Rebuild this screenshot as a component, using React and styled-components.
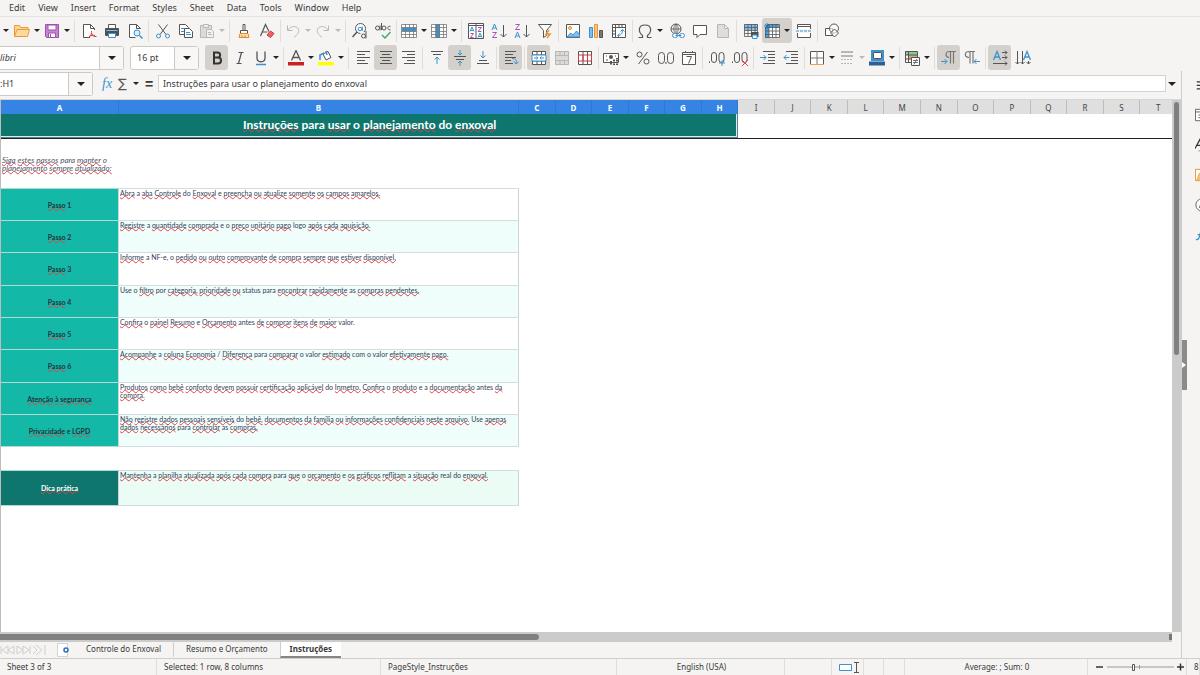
import { Fragment } from 'react';

import { createGlobalStyle, styled } from 'styled-components';

const INK = '#555';
const BLUE = '#3a93cf';
const SKY = '#83beec';
const GRAY = '#b9b7b4';
const PURPLE = '#a855b5';

// 16x16 toolbar drawings
const ICONS = {
  folder: (
    <>
      <path d="M.5 13.500V2.500h5l1.500 2h7V7" fill="#fbd68f" stroke="#e89a3c" />
      <path d="M.5 13.500 3 6.500h12.500l-2 7z" fill="#fbdb9c" stroke="#e89a3c" />
    </>
  ),
  save: (
    <>
      <path d="M1.500 1.500h13v13h-12l-1-1z" fill="#c883d4" stroke="#9c52ad" />
      <path d="M4 2h8v5H4zM4.500 10h7v4.500h-7z" fill="#fff" stroke="#9c52ad" />
      <path d="M6.500 11v3" stroke="#9c52ad" />
    </>
  ),
  pdf: (
    <>
      <path d="M13.500 7V5.500l-4-4h-7v13H9M9.500 1.500v4h4" fill="#fff" stroke={INK} />
      <path d="M7 15c3-2 4-5 3.500-7M10.500 10c1 3 3 4 5 3.500M8 13.500c2-1 4-1.500 6-1" stroke="#d83b45" />
    </>
  ),
  print: (
    <>
      <path d="M4.500 5V1.500h7V5" fill="#fff" stroke={INK} />
      <rect x="1" y="5" width="14" height="8" rx="1" fill="#4c5153" />
      <path d="M2.500 7.500h11" stroke={SKY} />
      <path d="M4.500 10.500h7v4h-7z" fill="#fff" stroke={BLUE} />
    </>
  ),
  preview: (
    <>
      <path d="M13.500 6V5.500l-4-4h-7v13h6M9.500 1.500v4h4" fill="#fff" stroke={INK} />
      <circle cx="10" cy="10" r="3" fill="#d9edfb" stroke={BLUE} />
      <path d="m12.500 12.500 3 3" stroke={BLUE} strokeWidth="1.500" />
    </>
  ),
  cut: (
    <>
      <path d="m3.500 1.500 7.500 10M12.500 1.500 5 11.500" stroke={INK} />
      <circle cx="3.500" cy="13" r="2" stroke={BLUE} />
      <circle cx="12.500" cy="13" r="2" stroke={BLUE} />
    </>
  ),
  copy: (
    <>
      <path d="M1.500 1.500h6l3 3v7h-9z" fill="#fff" stroke={INK} />
      <path d="M3 5.500h3M3 8.500h3" stroke={BLUE} />
      <path d="M6.500 5.500h5l3 3v6h-8z" fill="#fff" stroke={INK} />
      <path d="M8 9.500h4M8 11.500h5" stroke={BLUE} />
    </>
  ),
  paste: (
    <>
      <path d="M1.500 2.500h11v12h-11z" fill="#dddbd9" stroke={GRAY} />
      <path d="M4.500 1.500h5v3h-5z" fill="#eee" stroke={GRAY} />
      <path d="M7.500 6.500h5l2 2v6h-7z" fill="#f3f2f1" stroke={GRAY} />
      <path d="M9 9.500h3M9 11.500h4" stroke={GRAY} />
    </>
  ),
  brush: (
    <>
      <path d="M7 1.500h2v6H7z" fill="#fff" stroke={INK} />
      <path d="M4.500 7.500h7v3h-7z" fill="#fff" stroke={INK} />
      <path d="M4 10.500h8l1 4H3zM6 12v2M9 12v2" fill="#fbe0b8" stroke="#e08a2c" />
    </>
  ),
  clear: (
    <>
      <path d="M1.500 13 6.500 1.500l3.500 7M3.500 9h5" stroke={INK} strokeWidth="1.200" />
      <path d="m8 12 3.500-4L15 10.500 11.500 14.500z" fill="#f0626a" stroke="#c93640" />
    </>
  ),
  undo: <path d="M2.500 2.500v5h5M3 7c3-4.500 9-4.500 10.500-.5 1 3-1.500 5.500-4.500 8" stroke={GRAY} />,
  redo: <path d="M13.500 2.500v5h-5M13 7C10 2.500 4 2.500 2.500 6.500c-1 3 1.500 5.500 4.500 8" stroke={GRAY} />,
  find: (
    <>
      <circle cx="8.500" cy="5.500" r="5" fill="#fff" stroke={INK} />
      <path d="M5 9 .5 14" stroke={INK} strokeWidth="1.500" />
      <circle cx="8" cy="6" r="1.800" stroke={BLUE} />
      <path d="M10.300 3.500V8" stroke={BLUE} />
      <path d="M8.500 9h7v6.500h-7z" fill="#f5f4f2" />
      <circle cx="11.500" cy="13" r="2" stroke={INK} />
      <path d="M14 8v7.500" stroke={INK} />
    </>
  ),
  spell: (
    <>
      <circle cx="2.500" cy="5" r="2" stroke={INK} />
      <path d="M5 2.500v5M6.500 0v7M15.500 3.500c-3-1.500-4 3.500 0 3.500" stroke={INK} />
      <circle cx="9" cy="5" r="2" stroke={INK} />
      <path d="m7 12 3 3 5.500-6" stroke="#3bab6b" strokeWidth="1.400" />
    </>
  ),
  rows: (
    <>
      <path d="M1 1h14v14H1z" fill="#fff" />
      <path d="M1 4.500h14v4H1z" fill={BLUE} />
      <path d="M.5 1.500h15v13H.5zM.5 4.500h15M.5 8.500h15M.5 11.500h15M4.500 1v14M8.500 1v14M12.500 1v14" stroke="#777" strokeWidth=".8" />
    </>
  ),
  cols: (
    <>
      <path d="M1 1h14v14H1z" fill="#fff" />
      <path d="M5 1h4v14H5z" fill={BLUE} />
      <path d="M.5 1.500h15v13H.5zM.5 4.500h15M.5 8.500h15M.5 11.500h15M4.500 1v14M8.500 1v14M12.500 1v14" stroke="#777" strokeWidth=".8" />
    </>
  ),
  autosort: (
    <>
      <path d="M.5.5h15v15H.5zM8 1v14M1 2.500h14" fill="#fff" stroke={INK} />
      <path d="m2 8.500 2-4.500 2 4.500M3 7.500h2M10 14.500l2-4.500 2 4.500M11 13.500h2" stroke={BLUE} />
      <path d="M2.500 10.500h3l-3 4h3M10 4.500h3.500l-3.500 4h3.500" stroke={PURPLE} />
    </>
  ),
  asc: (
    <>
      <path d="m1 7 2.500-6L6 7M2 5h3" stroke={BLUE} />
      <path d="M1.500 9.500h4l-4 5h4.500" stroke={PURPLE} />
      <path d="M12.500 2v12M9.500 11l3 3 3-3" stroke={INK} />
    </>
  ),
  desc: (
    <>
      <path d="m1 15 2.500-6L6 15M2 13h3" stroke={BLUE} />
      <path d="M1.500 1.500h4l-4 5h4.500" stroke={PURPLE} />
      <path d="M12.500 2v12M9.500 11l3 3 3-3" stroke={INK} />
    </>
  ),
  filter: (
    <>
      <path d="M1.500 1.500h13l-5 6v5l-3 2v-7z" fill="#fff" stroke={INK} />
      <path d="m12 7-3 4h4l-3 4" stroke="#e8923a" strokeWidth="1.500" />
    </>
  ),
  image: (
    <>
      <path d="M1.500 1.500h13v13h-13z" fill="#fff" stroke={INK} />
      <circle cx="5" cy="5" r="1.500" fill="#fbd08a" stroke="#e8923a" />
      <path d="m2 14 3.500-4 2.500 2 3.500-4 3 3.500V14z" fill={SKY} stroke={BLUE} />
    </>
  ),
  chart: (
    <>
      <path d="M1.500 4.500h3v10h-3z" fill={SKY} stroke={BLUE} />
      <path d="M6.500 1.500h3v13h-3z" fill="#fbc77c" stroke="#e8923a" />
      <path d="M11.500 7.500h3v7h-3z" fill="#777" stroke={INK} />
    </>
  ),
  pivot: (
    <>
      <path d="M1.500 1.500h13v13h-13zM1.500 4.500h13M4.500 1.500v13M8 1.500v3M11 1.500v3M1.500 8h3M1.500 11h3" fill="#fff" stroke={INK} />
      <path d="M6.500 12.500c4 0 5-2 5-6m-2 2 2-2 2 2m-5 2-2 2 2 2" stroke={BLUE} />
    </>
  ),
  omega: <path d="M1.500 14.500h4v-2C1 9 1 2 8 2s7 7 2.500 10.500v2h4" stroke={INK} strokeWidth="1.200" />,
  link: (
    <>
      <circle cx="7" cy="6" r="5" stroke={INK} />
      <path d="M2 6h10M7 1v10M7 1c-3 3-3 7 0 10M7 1c3 3 3 7 0 10" stroke={INK} strokeWidth=".8" />
      <rect x="3.500" y="10.500" width="5" height="4" rx="2" fill="#fff" stroke={BLUE} />
      <rect x="10.500" y="10.500" width="5" height="4" rx="2" fill="#fff" stroke={BLUE} />
      <path d="M6.500 12.500h6" stroke={BLUE} />
    </>
  ),
  comment: <path d="M1.500 2.500h13v9H8l-3 3v-3H1.500z" fill="#fff" stroke={INK} />,
  page: <path d="M2.500 1.500h7l4 4v9h-11zM9.500 1.500v4h4" fill="#dedddb" stroke={GRAY} />,
  printArea: (
    <>
      <path d="M1 1h14v6H1z" fill={SKY} />
      <path d="M1.500 1.500h13v12h-13zM1.500 4.500h13M1.500 7.500h13M1.500 10.500h13M5 1v12M8.500 1v12M12 1v12" stroke={INK} strokeWidth=".8" />
      <path d="M8 9h7.500v5H8z" fill="#4c5153" />
      <path d="M9.500 12h4.500v3.500H9.500z" fill="#fff" stroke={BLUE} />
    </>
  ),
  freeze: (
    <>
      <path d="M4 4h11v11H4z" fill="#fff" />
      <path d="M3 1h12v3.500H3zM1 4h4v11H1z" fill="#4aa3e0" />
      <path d="M3.500 1.500h12v13h-14v-10M1 4.500h14M1 8h14M1 11.500h14M5 1v14M8.500 1v14M12 1v14" stroke={INK} strokeWidth=".8" />
      <path d="M0 3h6M3 0v6M1 1l4 4M5 1 1 5" stroke="#1c71b8" strokeWidth=".8" />
    </>
  ),
  split: (
    <>
      <path d="M1.500 6V1.500h13V6M1.500 10v4.500h13V10M1.500 3.500h13" fill="#fff" stroke={INK} />
      <path d="M0 8h16" stroke={BLUE} strokeDasharray="3 1" />
    </>
  ),
  shapes: (
    <>
      <path d="M1.500 5.500h7v7h-7z" fill="#fff" stroke={INK} />
      <circle cx="10" cy="5.500" r="4.500" fill="#fff" fillOpacity=".6" stroke={INK} />
      <path d="m10.500 6 4 4-4 4-4-4z" fill="#fff" fillOpacity=".6" stroke={INK} />
    </>
  ),
  bold: <path d="M5 2.500h3.500c3.500 0 3.500 5 0 5H5zM5 7.500h4c4 0 4 6 0 6H5z" stroke="#333" strokeWidth="2" />,
  italic: <path d="M6.500 2.500h5M4.500 13.500h5M9.500 2.500l-3 11" stroke={INK} strokeWidth="1.200" />,
  underline: (
    <>
      <path d="M4 1.500V8c0 5 8 5 8 0V1.500" stroke={INK} strokeWidth="1.300" />
      <path d="M3 14.500h10" stroke={BLUE} strokeWidth="1.500" />
    </>
  ),
  fontColor: (
    <>
      <path d="M3.500 10.500 8 .5l4.500 10M5 7.500h6" stroke={INK} strokeWidth="1.300" />
      <path d="M0 12h16v3.500H0z" fill="#c9211e" />
    </>
  ),
  highlight: (
    <>
      <path d="m5 4 5-2.500 3 6L8 10z" fill="#fff" stroke={INK} />
      <path d="M2 10V5l4-2M9 5l-1-4" stroke={BLUE} strokeWidth="1.500" />
      <path d="M0 12h16v3.500H0z" fill="#ff0" />
    </>
  ),
  left: <path d="M2 1.500h13M2 4.500h8M2 7.500h13M2 10.500h8M2 13.500h11" stroke={INK} />,
  center: <path d="M2 1.500h12M4 4.500h8M2 7.500h12M4 10.500h8M2 13.500h12" stroke={INK} />,
  right: <path d="M1 1.500h13M6 4.500h8M1 7.500h13M6 10.500h8M3 13.500h11" stroke={INK} />,
  top: (
    <>
      <path d="M2 1.500h12M4 4.500h8" stroke={INK} />
      <path d="M8 14V7.500m-2.500 2L8 7l2.500 2.500" stroke={BLUE} />
    </>
  ),
  middle: (
    <>
      <path d="M2 6.500h12M4 9.500h8" stroke={INK} />
      <path d="M8 0v5M6 3l2 2 2-2M8 16v-5M6 13l2-2 2 2" stroke={BLUE} />
    </>
  ),
  bottom: (
    <>
      <path d="M2 13.500h12M4 10.500h8" stroke={INK} />
      <path d="M8 1v7M5.500 5.500 8 8l2.500-2.500" stroke={BLUE} />
    </>
  ),
  wrap: (
    <>
      <path d="M2 1.500h11M2 4.500h8M2 7.500h11M2 10.500h6M2 13.500h8" stroke={INK} />
      <path d="M9 8.500c4 0 5 2 4 5m-2-2 2 2.500 2.500-2" stroke={BLUE} />
    </>
  ),
  merge: (
    <>
      <path d="M1.500 1.500h13v13h-13zM1.500 5h13M1.500 11h13M6 1.500V5M10.500 1.500V5M6 11v3.500M10.500 11v3.500" fill="#fff" stroke={INK} />
      <path d="M1 5h14v6H1z" fill="#fff" stroke={BLUE} />
      <path d="M3 8h4M9 8h4M5.500 6.500 7 8 5.500 9.500M10.500 6.500 9 8l1.500 1.500" stroke={BLUE} />
    </>
  ),
  mergeCells: <path d="M1.500 1.500h13v13h-13zM1.500 5.500h13M1.500 10.500h13M6 1.500v4M10.500 1.500v4M6 10.500v4M10.500 10.500v4" fill="#dddbd9" stroke={GRAY} />,
  unmerge: (
    <>
      <path d="M1.500 1.500h13v13h-13zM6 1.500v13M10.500 1.500v13" fill="#fff" stroke={INK} />
      <path d="M1.500 5h13v6h-13zM6 5v6M10.500 5v6" stroke="#cf3a42" />
    </>
  ),
  currency: (
    <>
      <path d="M.5 3.500h15v9H.5z" fill="#fff" stroke={INK} />
      <circle cx="8" cy="7" r="2" fill={INK} />
      <path d="M3 10h2M3 6h1M12 6h1" stroke={INK} />
      <path d="M8 11v4M11 9.500V15M14 8v7" stroke={INK} strokeWidth="2" strokeDasharray="1.500 .5" />
    </>
  ),
  percent: (
    <>
      <circle cx="4.500" cy="4.500" r="2.500" stroke={INK} />
      <circle cx="11.500" cy="11.500" r="2.500" stroke={INK} />
      <path d="m12.500 2-9 12" stroke={INK} />
    </>
  ),
  number: (
    <>
      <rect x=".5" y="2.500" width="6" height="11" rx="3" stroke={INK} />
      <rect x="9.500" y="2.500" width="6" height="11" rx="3" stroke={INK} />
      <path d="M8 12v2" stroke={INK} />
    </>
  ),
  date: (
    <>
      <path d="M1.500 2.500h13v12h-13zM1.500 4.500h13M4.500 1v2M11.500 1v2" fill="#fff" stroke={INK} />
      <path d="M5.500 6.500h5l-3 7" stroke={INK} />
    </>
  ),
  addDecimal: (
    <>
      <rect x="2.500" y="2.500" width="5" height="10" rx="2.500" stroke={INK} />
      <rect x="10" y="2.500" width="5" height="10" rx="2.500" stroke={INK} />
      <path d="M.5 11.500V13" stroke={INK} />
      <path d="M10 13h6M13 10v6" stroke={BLUE} />
    </>
  ),
  delDecimal: (
    <>
      <rect x="2.500" y="2.500" width="5" height="10" rx="2.500" stroke={INK} />
      <rect x="10" y="2.500" width="5" height="10" rx="2.500" stroke={INK} />
      <path d="M.5 11.500V13" stroke={INK} />
      <path d="m10 10 6 6M16 10l-6 6" stroke="#e04850" />
    </>
  ),
  indent: (
    <>
      <path d="M3 1.500h12M8 4.500h7M8 7.500h7M8 10.500h7M3 13.500h12" stroke={INK} />
      <path d="M0 7.500h6M3.500 5 6 7.500 3.500 10" stroke={BLUE} />
    </>
  ),
  outdent: (
    <>
      <path d="M3 1.500h12M8 4.500h7M8 7.500h7M8 10.500h7M3 13.500h12" stroke={INK} />
      <path d="M6.500 7.500H1M3.500 5 1 7.500 3.500 10" stroke={BLUE} />
    </>
  ),
  borders: (
    <>
      <path d="M1.500 1.500h13v13h-13z" fill="#fff" stroke={INK} />
      <path d="M8 1v13.500M1.500 8h13" stroke="#777" />
      <path d="M1 14.500h14" stroke="#e8a24a" />
    </>
  ),
  lineStyle: (
    <>
      <path d="M2 2h12M2 6h12" stroke={GRAY} strokeWidth="2" />
      <path d="M2 9.500h12M2 13.500h12" stroke={GRAY} strokeDasharray="2 1" />
    </>
  ),
  lineColor: (
    <>
      <path d="M3 1h11v9H3z" fill="#fff" stroke={BLUE} strokeWidth="2" />
      <path d="M4.500 2.500h8v6h-8z" stroke={INK} />
      <path d="M0 11.500h16v4H0z" fill="#2a6099" />
    </>
  ),
  conditional: (
    <>
      <path d="M1 1h12v4H1z" fill="#7fd08f" />
      <path d="M4 5h9v4H4z" fill="#f29a7c" />
      <path d="M1.500 1.500h12v11h-12zM1.500 5h12M1.500 9h12M4.500 1.500v11" stroke={INK} />
      <path d="M7.500 7.500h8v8h-8z" fill="#fff" stroke={INK} />
      <path d="M9 10.500h5M9 12.500h5M13 9l-3 5.500" stroke={INK} strokeWidth=".8" />
    </>
  ),
  ltr: (
    <>
      <path d="M8 7.500C4 7 4 1.500 8.500 1.500H15M9.500 1.500v12M12.500 1.500v12" stroke="#777" strokeWidth="1.200" />
      <path d="M0 11.500h6M3.500 9 6 11.500 3.500 14" stroke={BLUE} />
    </>
  ),
  rtl: (
    <>
      <path d="M5 7.500C0 7 0 1.500 5.500 1.500H11M6 1.500v12M9 1.500v12" stroke="#777" strokeWidth="1.200" />
      <path d="M16 11.500h-6M12.500 9 10 11.500l2.500 2.500" stroke={BLUE} />
    </>
  ),
  textH: (
    <>
      <path d="M1.500 10 5 1.500 8.500 10M3 7h4" stroke={BLUE} strokeWidth="1.300" />
      <path d="M10 2.500h5M10 7.500h5M1 13.500h14M13 .5l2 2-2 2M13 5.500l2 2-2 2M13 11.500l2 2-2 2" stroke={INK} />
    </>
  ),
  textV: (
    <>
      <path d="M8.500 10 12 1.500 15.500 10M10 7h4" stroke={BLUE} strokeWidth="1.300" />
      <path d="M2.500 1v13M7.500 1v13M13.500 11v3M.5 12l2 2 2-2M5.500 12l2 2 2-2M11.500 12l2 2 2-2" stroke={INK} />
    </>
  ),
  menu: <path d="M2 4.500h12M2 8.500h12M2 12.500h12" stroke="#333" strokeWidth="1.500" />,
  properties: <path d="M.5 1.500h15v13H.5zM.5 4.500h15M4 8h8M4 11h8" fill="#fff" stroke={INK} />,
  styles: (
    <>
      <path d="M0 12 6 1l4 8M2.500 8.500h6" stroke="#333" strokeWidth="1.500" />
      <path d="M4 15c3 0 3-3 6-3" stroke={BLUE} />
    </>
  ),
  gallery: (
    <>
      <path d="M.5 1.500h15v13H.5z" fill="#fff" stroke="#e08a2c" />
      <path d="M2 14 5 6h10v8z" fill="#f9c568" stroke="#e8a24a" />
    </>
  ),
  navigator: (
    <>
      <circle cx="8" cy="8" r="7" fill="#fff" stroke={INK} />
      <path d="m11 5-2 4.500L5 11l1.500-4z" stroke={INK} />
    </>
  ),
  functions: <path d="M1 13c4 2 4-5 6-10 1-2 3-2 4 0M3 7.500h7" stroke={BLUE} strokeWidth="1.500" />,
};

// "+" has a drop-down arrow, "-" a disabled one, "*" is switched on
const STANDARD_BAR = [
  ['folder+', 'save+'],
  ['pdf', 'print', 'preview'],
  ['cut', 'copy', 'paste-'],
  ['brush', 'clear'],
  ['undo-', 'redo-'],
  ['find', 'spell'],
  ['rows+', 'cols+'],
  ['autosort', 'asc', 'desc', 'filter'],
  ['image', 'chart', 'pivot'],
  ['omega+', 'link', 'comment', 'page'],
  ['printArea', 'freeze+*', 'split'],
  ['shapes'],
];

const FORMAT_BAR = [
  ['bold*', 'italic', 'underline+'],
  ['fontColor+', 'highlight+'],
  ['left', 'center*', 'right'],
  ['top', 'middle*', 'bottom'],
  ['wrap*'],
  ['merge*', 'mergeCells', 'unmerge'],
  ['currency+', 'percent', 'number', 'date'],
  ['addDecimal', 'delDecimal'],
  ['indent', 'outdent'],
  ['borders+', 'lineStyle-', 'lineColor+'],
  ['conditional+'],
  ['ltr*', 'rtl'],
  ['textH*', 'textV'],
];

const MENUS = ['Edit', 'View', 'Insert', 'Format', 'Styles', 'Sheet', 'Data', 'Tools', 'Window', 'Help'];
const COLUMNS = 'ABCDEFGHIJKLMNOPQRST'.split('');
const TABS = ['Controle do Enxoval', 'Resumo e Orçamento', 'Instruções'];
const PANELS = ['menu', 'properties', 'styles', 'gallery', 'navigator', 'functions'];

const STEPS = [
  ['Passo 1', 'Abra a aba Controle do Enxoval e preencha ou atualize somente os campos amarelos.'],
  ['Passo 2', 'Registre a quantidade comprada e o preço unitário pago logo após cada aquisição.'],
  ['Passo 3', 'Informe a NF-e, o pedido ou outro comprovante de compra sempre que estiver disponível.'],
  ['Passo 4', 'Use o filtro por categoria, prioridade ou status para encontrar rapidamente as compras pendentes.'],
  ['Passo 5', 'Confira o painel Resumo e Orçamento antes de comprar itens de maior valor.'],
  ['Passo 6', 'Acompanhe a coluna Economia / Diferença para comparar o valor estimado com o valor efetivamente pago.'],
  [
    'Atenção à segurança',
    'Produtos como bebê conforto devem possuir certificação aplicável do Inmetro. Confira o produto e a documentação antes da compra.',
  ],
  [
    'Privacidade e LGPD',
    'Não registre dados pessoais sensíveis do bebê, documentos da família ou informações confidenciais neste arquivo. Use apenas dados necessários para controlar as compras.',
  ],
];

// words the en-US dictionary accepts
const KNOWN = ['a', 'o', 'e', 'do', 'para', 'as', 'real', 'status', 'valor', 'valor.', 'logo', 'Use', 'antes', 'com', 'por', 'NF-e,', '/'];

function Spelled({ children }) {
  return children.split(' ').map((word, i) => (
    <Fragment key={i}>
      {i > 0 && ' '}
      {KNOWN.includes(word) || /^\d+$/.test(word) ? word : <St.Typo>{word}</St.Typo>}
    </Fragment>
  ));
}

function Icon({ name, size = 16 }) {
  return (
    <St.Icon viewBox="0 0 16 16" width={size} height={size} aria-hidden="true">
      {ICONS[name]}
    </St.Icon>
  );
}

function Tools({ groups }) {
  return groups.map((group, i) => (
    <Fragment key={i}>
      {i > 0 && <St.Separator />}
      {group.map((item) => {
        const name = item.replace(/[^a-zA-Z]/g, '');
        const split = /[+-]/.test(item);
        return (
          <St.Tool key={name} type="button" aria-label={name} $split={split} $active={item.includes('*')}>
            <Icon name={name} />
            {split && <St.Caret $muted={item.includes('-')} />}
          </St.Tool>
        );
      })}
    </Fragment>
  ));
}

function App() {
  return (
    <St.Window>
      <GlobalStyle />
      <St.MenuBar>
        {MENUS.map((menu) => (
          <St.Menu key={menu} type="button">{menu}</St.Menu>
        ))}
      </St.MenuBar>
      <St.Toolbar>
        <St.DropButton type="button" aria-label="New">
          <St.Caret />
        </St.DropButton>
        <Tools groups={STANDARD_BAR} />
      </St.Toolbar>
      <St.Toolbar>
        <St.Combo $width="124px">
          <St.ComboInput aria-label="Font name" defaultValue="libri" $italic />
          <St.ComboButton type="button" aria-label="Font list"><St.Caret $big /></St.ComboButton>
        </St.Combo>
        <St.Combo $width="69px" $inner>
          <St.ComboInput aria-label="Font size" defaultValue="16 pt" $pad="6px" />
          <St.ComboButton type="button" aria-label="Size list"><St.Caret $big /></St.ComboButton>
        </St.Combo>
        <Tools groups={FORMAT_BAR} />
      </St.Toolbar>

      <St.Body>
        <St.Document>
          <St.FormulaBar>
            <St.Combo $width="93px">
              <St.ComboInput aria-label="Name box" defaultValue=":H1" />
              <St.ComboButton type="button" aria-label="Ranges"><St.Caret $big /></St.ComboButton>
            </St.Combo>
            <St.FormulaTools>
              <St.Fx type="button">fx</St.Fx>
              <St.Sigma type="button">∑</St.Sigma>
              <St.Caret />
              <St.Equals type="button">=</St.Equals>
            </St.FormulaTools>
            <St.FormulaInput aria-label="Formula" defaultValue="Instruções para usar o planejamento do enxoval" />
            <St.DropButton type="button" aria-label="Expand formula bar"><St.Caret $big /></St.DropButton>
          </St.FormulaBar>

          <St.SheetArea>
            <St.Viewport>
              <St.Sheet>
                <colgroup>
                  <St.Col $width="118px" />
                  <St.Col $width="400px" />
                  {COLUMNS.slice(2).map((c) => <St.Col key={c} />)}
                </colgroup>
                <thead>
                  <tr>
                    {COLUMNS.map((c, i) => (
                      <St.ColumnHead key={c} scope="col" $selected={i < 8}>{c}</St.ColumnHead>
                    ))}
                  </tr>
                </thead>
                <tbody>
                  <St.TitleRow>
                    <St.Title colSpan={8}><Spelled>Instruções para usar o planejamento do enxoval</Spelled></St.Title>
                    <td colSpan={12} />
                  </St.TitleRow>
                  <St.Row $height="50px">
                    <St.Intro><Spelled>Siga estes passos para manter o planejamento sempre atualizado:</Spelled></St.Intro>
                    <td colSpan={19} />
                  </St.Row>
                </tbody>
                <St.Steps>
                  {STEPS.map(([label, text], i) => (
                    <tr key={label}>
                      <St.Label scope="row"><Spelled>{label}</Spelled></St.Label>
                      <St.Text $fill={i % 2 ? '#effdfb' : '#fff'}><Spelled>{text}</Spelled></St.Text>
                    </tr>
                  ))}
                </St.Steps>
                <tbody>
                  <St.Row $height="24px"><td colSpan={20} /></St.Row>
                  <St.Row $height="35px">
                    <St.Label scope="row" $tip><Spelled>Dica prática</Spelled></St.Label>
                    <St.Text $fill="#ebfcf5">
                      <Spelled>
                        Mantenha a planilha atualizada após cada compra para que o orçamento e os gráficos reflitam a situação real do enxoval.
                      </Spelled>
                    </St.Text>
                  </St.Row>
                </tbody>
              </St.Sheet>
            </St.Viewport>
            <St.VTrack><St.VThumb /></St.VTrack>
          </St.SheetArea>
          <St.HTrack><St.HThumb /><St.HGrip /></St.HTrack>

          <St.TabBar>
            <St.TabNav viewBox="0 0 46 12" width="46" height="12" aria-hidden="true">
              <path d="M1 2v8M8 2 2 6l6 4zM14 2 8 6l6 4zM17 2l6 4-6 4zM23 2l6 4-6 4zM30 2v8M33 2l4 4-4 4M36 1l6 5-6 5M45 1v10" />
            </St.TabNav>
            <St.AddSheet type="button" aria-label="Add sheet">
              <svg viewBox="0 0 14 14" width="14" height="14" fill="none">
                <path d="M1.500.5h10v13h-10z" fill="#fff" stroke="#d5d3d0" />
                <circle cx="10" cy="7" r="2" stroke="#2f6db5" strokeWidth="1.500" />
              </svg>
            </St.AddSheet>
            {TABS.map((tab, i) => (
              <St.Tab key={tab} type="button" $active={i === 2}>{tab}</St.Tab>
            ))}
          </St.TabBar>
        </St.Document>

        <St.Sidebar>
          <St.Collapse type="button" aria-label="Hide sidebar" />
          <St.Panels>
            {PANELS.map((name) => (
              <St.Panel key={name} type="button" aria-label={name}><Icon name={name} size={14} /></St.Panel>
            ))}
          </St.Panels>
        </St.Sidebar>
      </St.Body>

      <St.StatusBar>
        <St.Status>Sheet 3 of 3</St.Status>
        <St.Status>Selected: 1 row, 8 columns</St.Status>
        <St.Status>PageStyle_Instruções</St.Status>
        <St.Status $center>English (USA)</St.Status>
        <St.Status />
        <St.Status>
          <St.Icon viewBox="0 0 20 12" width="20" height="12" aria-hidden="true">
            <path d="M.5 3.500h12v6H.5z" fill="#fff" stroke={BLUE} />
            <path d="M15 1.500h5M15 11.500h5M17.500 1.500v10" stroke={INK} />
          </St.Icon>
        </St.Status>
        <St.Status />
        <St.Status />
        <St.Status $center>Average: ; Sum: 0</St.Status>
        <St.Status>
          <St.Icon viewBox="0 0 90 12" width="90" height="12" aria-hidden="true">
            <path d="M1 6h7M82 6h7M85.500 2.500v7" stroke="#333" strokeWidth="1.500" />
            <path d="M12 6h67M44.500 4v4" stroke="#999" />
            <path d="M37.500 3.500h2v6h-2z" fill="#fff" stroke={INK} />
          </St.Icon>
        </St.Status>
        <St.Status>8</St.Status>
      </St.StatusBar>
    </St.Window>
  );
}

export default App;

const GlobalStyle = createGlobalStyle`
  * {
    box-sizing: border-box;
  }

  body {
    margin: 0;
    font: 9px 'Noto Sans', sans-serif;
    color: #3a3a3a;
    background: #f5f4f2;
  }

  button, input {
    margin: 0;
    padding: 0;
    border: 0;
    background: none;
    font: inherit;
    color: inherit;
    outline: none;
  }
`;

const St = {
  Window: styled.div`
    display: flex;
    flex-direction: column;
    min-height: 100vh;
    overflow: hidden;
  `,

  MenuBar: styled.nav`
    display: flex;
    gap: 13px;
    height: 17px;
    padding-left: 9px;
    border-bottom: 1px solid #e6e4e2;
  `,

  Menu: styled.button`
    line-height: 16px;
  `,

  Toolbar: styled.div`
    display: flex;
    align-items: center;
    height: 27px;
  `,

  Tool: styled.button`
    display: flex;
    flex: none;
    align-items: center;
    justify-content: center;
    gap: 4px;
    width: ${({ $split }) => ($split ? 30 : 23)}px;
    height: 25px;
    border-radius: 3px;
    background: ${({ $active }) => ($active ? '#d4d0cc' : 'transparent')};
  `,

  Icon: styled.svg`
    display: block;
    flex: none;
    fill: none;
  `,

  Caret: styled.span`
    flex: none;
    width: 0;
    border: solid transparent;
    border-width: ${({ $big }) => ($big ? '4px 4px 0' : '3px 3px 0')};
    border-top-color: ${({ $muted }) => ($muted ? '#bbb' : '#222')};
  `,

  DropButton: styled.button`
    display: flex;
    flex: none;
    align-items: center;
    justify-content: center;
    width: 12px;
    height: 24px;
  `,

  Separator: styled.span`
    flex: none;
    width: 1px;
    height: 22px;
    margin: 0 2px;
    background: #e0dedb;
  `,

  Combo: styled.div`
    display: flex;
    flex: none;
    width: ${({ $width }) => $width};
    height: 24px;
    margin: ${({ $inner }) => ($inner ? '0 6px' : '0')};
    border: 1px solid #cdc9c5;
    border-left-width: ${({ $inner }) => ($inner ? '1px' : '0')};
    border-radius: ${({ $inner }) => ($inner ? '3px' : '0 3px 3px 0')};
    background: #fff;
  `,

  ComboInput: styled.input`
    flex: 1;
    min-width: 0;
    padding-left: ${({ $pad }) => $pad || '0'};
    font-style: ${({ $italic }) => ($italic ? 'italic' : 'normal')};
  `,

  ComboButton: styled.button`
    display: flex;
    align-items: center;
    justify-content: center;
    width: 24px;
    border-left: 1px solid #cdc9c5;
    background: #f8f7f6;
  `,

  Body: styled.div`
    display: flex;
    flex: 1;
  `,

  Document: styled.main`
    display: flex;
    flex: 1;
    flex-direction: column;
    min-width: 0;
    border-right: 1px solid #cfcdca;
  `,

  FormulaBar: styled.div`
    display: flex;
    align-items: center;
    height: 29px;
    padding: 0 3px 3px 0;
    border-bottom: 1px solid #d8d6d3;
  `,

  FormulaTools: styled.div`
    display: flex;
    align-items: center;
    gap: 6px;
    width: 65px;
    padding-left: 9px;
  `,

  Fx: styled.button`
    font: italic 14px/16px 'Liberation Serif', serif;
    color: #3a93cf;
  `,

  Sigma: styled.button`
    font: 13px/16px 'DejaVu Sans', sans-serif;
    color: #555;
  `,

  Equals: styled.button`
    font: bold 14px/16px 'Liberation Sans', sans-serif;
  `,

  FormulaInput: styled.input`
    flex: 1;
    height: 17px;
    padding-left: 4px;
    border: 1px solid #d5d2cf;
    background: #fff;
  `,

  SheetArea: styled.div`
    display: flex;
    flex: 1;
  `,

  Viewport: styled.div`
    flex: 1;
    min-width: 0;
    overflow: hidden;
    border-left: 1px solid #bdbdbd;
    background: #fff;
  `,

  Sheet: styled.table`
    width: calc(100% + 5px);
    table-layout: fixed;
    border-collapse: separate;
    border-spacing: 0;
    font: 7px/8px Lato, sans-serif;

    td,
    th {
      padding: 0;
    }
  `,

  Col: styled.col`
    width: ${({ $width }) => $width || 'auto'};
  `,

  ColumnHead: styled.th`
    height: 14px;
    border-right: 1px solid ${({ $selected }) => ($selected ? '#2f78cf' : '#bdbdbd')};
    background: ${({ $selected }) => ($selected ? '#3584e4' : '#dfdfdf')};
    font: ${({ $selected }) => ($selected ? 700 : 400)} 8px/13px 'Noto Sans', sans-serif;
    color: ${({ $selected }) => ($selected ? '#fff' : '#444')};
  `,

  TitleRow: styled.tr`
    height: 25px;

    td {
      border-bottom: 1px solid #222;
    }
  `,

  Title: styled.td`
    background: #0f766e;
    box-shadow: inset -1px -1px #5b7f8f, inset -2px -2px #d8efec;
    font: bold 12px/14px Lato, sans-serif;
    color: #fff;
    text-align: center;

    && {
      padding-bottom: 3px;
    }
  `,

  Row: styled.tr`
    height: ${({ $height }) => $height};
  `,

  Intro: styled.td`
    color: #475569;
    font-size: 8px;
    font-style: italic;
    vertical-align: middle;

    && {
      padding-left: 1px;
    }
  `,

  Steps: styled.tbody`
    tr {
      height: 32px;
    }

    tr:nth-child(3n) {
      height: 33px;
    }
  `,

  Label: styled.th`
    border-right: 1px solid #cbd5d9;
    border-bottom: 1px solid #b5d9d6;
    background: ${({ $tip }) => ($tip ? '#0f766e' : '#14b8a6')};
    box-shadow: 0 -1px #b5d9d6;
    color: ${({ $tip }) => ($tip ? '#fff' : '#1f3540')};
    text-align: center;
    vertical-align: middle;
  `,

  Text: styled.td`
    border-right: 1px solid #cbd5d9;
    border-bottom: 1px solid #d3dddf;
    background: ${({ $fill }) => $fill};
    box-shadow: 0 -1px #d3dddf;
    color: #334155;
    vertical-align: top;

    && {
      padding-left: 1px;
    }
  `,

  Typo: styled.span`
    text-decoration: underline wavy #e0404a 1px;
    text-decoration-skip-ink: none;
    text-underline-offset: -1px;
  `,

  VTrack: styled.div`
    width: 9px;
    padding: 2px;
    background: #cbcbcb;
  `,

  VThumb: styled.div`
    height: 48%;
    border-radius: 3px;
    background: #808080;
  `,

  HTrack: styled.div`
    display: flex;
    justify-content: space-between;
    height: 10px;
    margin-right: 9px;
    padding: 2px 0;
    background: #cbcbcb;
  `,

  HThumb: styled.div`
    width: 46%;
    border-radius: 0 3px 3px 0;
    background: #808080;
  `,

  HGrip: styled.div`
    width: 3px;
    background: #777;
  `,

  TabBar: styled.div`
    display: flex;
    height: 16px;
    font-size: 8px;
  `,

  TabNav: styled.svg`
    align-self: center;
    fill: none;
    stroke: #d0cecb;
  `,

  AddSheet: styled.button`
    display: flex;
    align-items: center;
    width: 28px;
    padding-left: 10px;
  `,

  Tab: styled.button`
    padding: 0 ${({ $active }) => ($active ? 9 : 12)}px;
    border-bottom: 2px solid ${({ $active }) => ($active ? '#858585' : 'transparent')};
    background: ${({ $active }) => ($active ? '#fff' : 'transparent')};
    font-weight: ${({ $active }) => ($active ? 700 : 400)};
    line-height: 14px;

    & + & {
      border-left: 1px solid #d0cecb;
    }
  `,

  Sidebar: styled.aside`
    display: flex;
    align-items: center;
    width: 18px;
    overflow: hidden;
  `,

  Collapse: styled.button`
    flex: none;
    width: 5px;
    height: 50px;
    background: #8b8b8b;

    &::after {
      content: '';
      display: block;
      width: 0;
      border: solid transparent;
      border-width: 3px 0 3px 4px;
      border-left-color: #fff;
    }
  `,

  Panels: styled.div`
    display: flex;
    flex: none;
    flex-direction: column;
    align-self: flex-start;
    gap: 16px;
    padding: 7px 0 0 8px;
  `,

  Panel: styled.button`
    width: 14px;
    height: 14px;
  `,

  StatusBar: styled.footer`
    display: grid;
    grid-template-columns: 157fr 224fr 236fr 168fr 47px 32px 20px 21px 183fr 99px 13px;
    height: 17px;
    border-top: 1px solid #d0cecb;
    font-size: 8px;
    line-height: 16px;
  `,

  Status: styled.div`
    display: flex;
    align-items: center;
    justify-content: ${({ $center }) => ($center ? 'center' : 'flex-start')};
    min-width: 0;
    padding-left: ${({ $center }) => ($center ? 2 : 7)}px;
    border-right: 1px solid #e0dedb;
    white-space: nowrap;
  `,
};
